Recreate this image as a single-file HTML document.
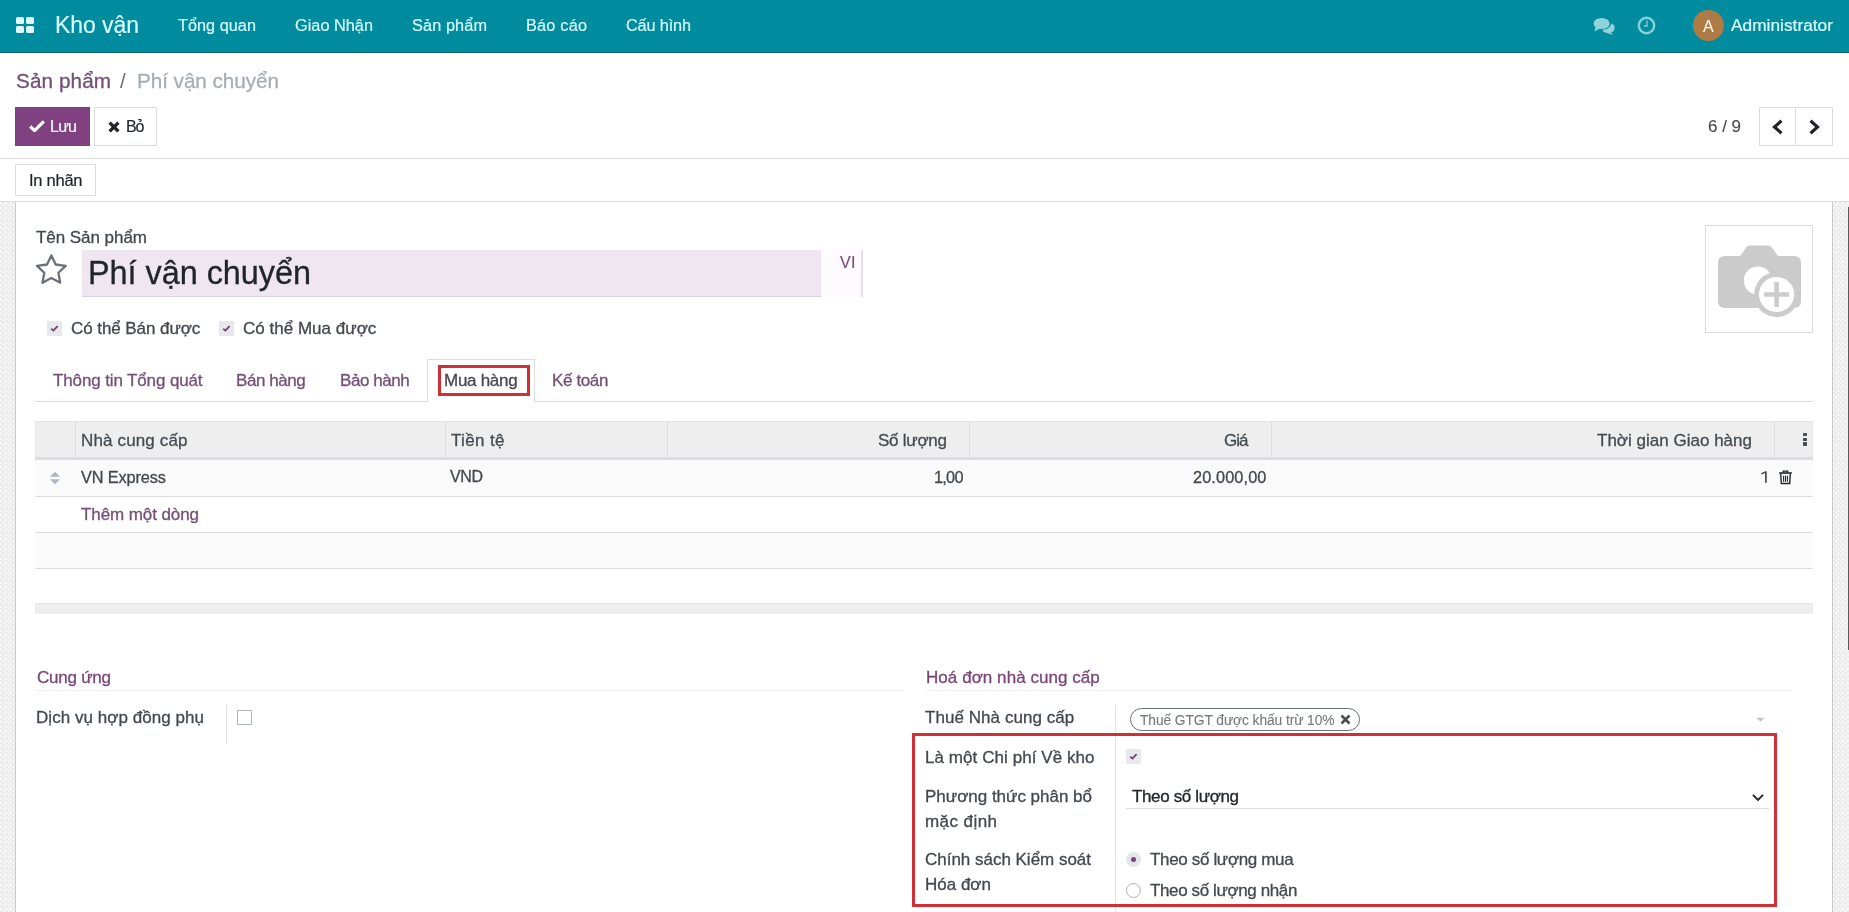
<!DOCTYPE html>
<html><head><meta charset="utf-8"><title>Phí vận chuyển</title>
<style>
html,body{margin:0;padding:0;width:1849px;height:912px;overflow:hidden;background:#fff;font-family:"Liberation Sans", sans-serif;}
.t{position:absolute;white-space:nowrap;line-height:1;will-change:transform;}
</style></head><body>
<div style="position:absolute;left:0px;top:0px;width:1849px;height:52px;background:#008C9E"></div>
<div style="position:absolute;left:0px;top:52px;width:1849px;height:1px;background:#0d5a66"></div>
<div style="position:absolute;left:15.5px;top:16.8px;width:8.5px;height:7.1px;background:#dff9fb;border-radius:1.5px"></div>
<div style="position:absolute;left:25.7px;top:16.8px;width:8.5px;height:7.1px;background:#dff9fb;border-radius:1.5px"></div>
<div style="position:absolute;left:15.5px;top:26px;width:8.5px;height:7.1px;background:#dff9fb;border-radius:1.5px"></div>
<div style="position:absolute;left:25.7px;top:26px;width:8.5px;height:7.1px;background:#dff9fb;border-radius:1.5px"></div>
<div class="t" style="left: 54.5px; top: 14.4px; font-size: 23px; color: rgb(217, 252, 255); font-weight: normal; -webkit-text-stroke-width: 0.15px; letter-spacing: -0.068px;">Kho vận</div>
<div class="t" style="left: 178px; top: 17px; font-size: 16.3px; color: rgb(217, 252, 255); font-weight: normal; -webkit-text-stroke-width: 0.15px; letter-spacing: 0.018px;">Tổng quan</div>
<div class="t" style="left: 295px; top: 17px; font-size: 16.3px; color: rgb(217, 252, 255); font-weight: normal; -webkit-text-stroke-width: 0.15px; letter-spacing: 0.02px;">Giao Nhận</div>
<div class="t" style="left: 412px; top: 17px; font-size: 16.3px; color: rgb(217, 252, 255); font-weight: normal; -webkit-text-stroke-width: 0.15px; letter-spacing: 0.109px;">Sản phẩm</div>
<div class="t" style="left: 526px; top: 17px; font-size: 16.3px; color: rgb(217, 252, 255); font-weight: normal; -webkit-text-stroke-width: 0.15px; letter-spacing: 0.208px;">Báo cáo</div>
<div class="t" style="left: 626px; top: 17px; font-size: 16.3px; color: rgb(217, 252, 255); font-weight: normal; -webkit-text-stroke-width: 0.15px; letter-spacing: -0.156px;">Cấu hình</div>
<svg style="position:absolute;left:1593px;top:17px" width="23" height="19" viewBox="0 0 23 19">
<g fill="#8fd3db">
<ellipse cx="8.6" cy="6.5" rx="8" ry="5.6"></ellipse>
<path d="M2.5 10 L1.5 14.5 L7 11.5 Z"></path>
<path d="M18.5 6.6 C21 7.7 22 9.4 21.6 11.6 C21.2 13.7 19.8 15.2 18 15.7 L20 17.9 L14 16 C11.5 15.7 10 14.6 9.3 12.8 C13.8 12.6 17.8 10.4 18.5 6.6 Z"></path>
</g></svg>
<svg style="position:absolute;left:1637px;top:16px" width="19" height="19" viewBox="0 0 19 19">
<circle cx="9.5" cy="9.5" r="7.7" fill="none" stroke="#86d2db" stroke-width="2.4"></circle>
<path d="M10 4.6 V10 H6.8" fill="none" stroke="#86d2db" stroke-width="1.3"></path>
</svg>
<div style="position:absolute;left:1693px;top:10px;width:31px;height:31px;background:#ae7b45;border-radius:50%"></div>
<div class="t" style="left:1703px;top:18.8px;font-size:16px;color:#fff8ee;font-weight:normal;-webkit-text-stroke-width:0.1px;">A</div>
<div class="t" style="left: 1731px; top: 16.8px; font-size: 17.3px; color: rgb(217, 252, 255); font-weight: normal; -webkit-text-stroke-width: 0.2px; letter-spacing: 0.016px;">Administrator</div>
<div class="t" style="left: 15.8px; top: 71.1px; font-size: 20.7px; color: rgb(116, 79, 119); font-weight: normal; -webkit-text-stroke-width: 0.3px; letter-spacing: 0.098px;">Sản phẩm</div>
<div class="t" style="left:120.3px;top:71.1px;font-size:20.7px;color:#6a6f75;font-weight:normal;-webkit-text-stroke-width:0px;">/</div>
<div class="t" style="left: 136.8px; top: 71.1px; font-size: 20.7px; color: rgb(167, 173, 179); font-weight: normal; -webkit-text-stroke-width: 0.3px; letter-spacing: -0.048px;">Phí vận chuyển</div>
<div style="position:absolute;left:15px;top:107px;width:75px;height:39px;background:#7F417F"></div>
<svg style="position:absolute;left:28.5px;top:119.5px" width="16" height="12" viewBox="0 0 16 12">
<path d="M1.2 6.3 L5.6 10.6 L14.8 1.4" fill="none" stroke="#fff" stroke-width="3.2"></path></svg>
<div class="t" style="left: 49.8px; top: 118.5px; font-size: 16px; color: rgb(255, 255, 255); font-weight: normal; -webkit-text-stroke-width: 0.1px; letter-spacing: -0.758px;">Lưu</div>
<div style="position:absolute;left:94px;top:107px;width:63px;height:39px;box-sizing:border-box;border:1px solid #dddddd;background:#fff"></div>
<svg style="position:absolute;left:107.5px;top:120.5px" width="12" height="12" viewBox="0 0 12 12">
<path d="M1.6 1.6 L10.4 10.4 M10.4 1.6 L1.6 10.4" fill="none" stroke="#212529" stroke-width="3.4"></path></svg>
<div class="t" style="left: 125.9px; top: 118.5px; font-size: 16px; color: rgb(33, 37, 41); font-weight: normal; -webkit-text-stroke-width: 0.15px; letter-spacing: -1.078px;">Bỏ</div>
<div class="t" style="left: 1708px; top: 117.6px; font-size: 17px; color: rgb(74, 74, 74); font-weight: normal; -webkit-text-stroke-width: 0.15px; letter-spacing: -0.023px;">6 / 9</div>
<div style="position:absolute;left:1759px;top:107px;width:74px;height:39px;box-sizing:border-box;border:1px solid #dddddd;background:#fff"></div>
<div style="position:absolute;left:1795px;top:107px;width:1px;height:39px;background:#dddddd"></div>
<svg style="position:absolute;left:1771px;top:118.5px" width="14" height="16" viewBox="0 0 14 16">
<path d="M10.5 1.8 L3.5 8 L10.5 14.2" fill="none" stroke="#212529" stroke-width="3.2"></path></svg>
<svg style="position:absolute;left:1806.5px;top:118.5px" width="14" height="16" viewBox="0 0 14 16">
<path d="M3.5 1.8 L10.5 8 L3.5 14.2" fill="none" stroke="#212529" stroke-width="3.2"></path></svg>
<div style="position:absolute;left:0px;top:158px;width:1849px;height:1px;background:#dddddd"></div>
<div style="position:absolute;left:15px;top:164px;width:81px;height:32px;box-sizing:border-box;border:1px solid #dddddd;background:#fff"></div>
<div class="t" style="left: 29px; top: 172.1px; font-size: 16.5px; color: rgb(33, 37, 41); font-weight: normal; -webkit-text-stroke-width: 0.2px; letter-spacing: -0.26px;">In nhãn</div>
<div style="position:absolute;left:0px;top:201px;width:1849px;height:1px;background:#dddddd"></div>
<div style="position:absolute;left:0px;top:202px;width:1849px;height:710px;background-color:#f1f1f1;background-image:repeating-conic-gradient(#e9e9e9 0 25%, #f8f8f8 0 50%);background-size:4.8px 4.8px"></div>
<div style="position:absolute;left:15px;top:202px;width:1818px;height:710px;box-sizing:border-box;background:#fff;border-left:1px solid #c9c9c9;border-right:1px solid #c9c9c9"></div>
<div style="position:absolute;left:1847.5px;top:207px;width:1.5px;height:443px;background:#5a5a5a"></div>
<div class="t" style="left: 35.7px; top: 228.9px; font-size: 17px; color: rgb(67, 72, 78); font-weight: normal; -webkit-text-stroke-width: 0.3px; letter-spacing: -0.047px;">Tên Sản phẩm</div>
<svg style="position:absolute;left:35px;top:253px" width="33" height="33" viewBox="0 0 33 33">
<path d="M16.35 2.40 L20.70 11.51 L30.71 12.83 L23.39 19.79 L25.23 29.72 L16.35 24.90 L7.47 29.72 L9.31 19.79 L1.99 12.83 L12.00 11.51 Z" fill="none" stroke="#6c7177" stroke-width="2.3" stroke-linejoin="round"></path></svg>
<div style="position:absolute;left:82px;top:250px;width:739px;height:46px;background:#f0e6f2;border-bottom:1px solid #d9d2dc"></div>
<div style="position:absolute;left:821px;top:250px;width:40px;height:47px;background:#fdfbfd"></div>
<div style="position:absolute;left:861px;top:250px;width:1.5px;height:47px;background:#e2e2e6"></div>
<div class="t" style="left: 88.4px; top: 256.7px; font-size: 32.4px; color: rgb(33, 37, 41); font-weight: normal; -webkit-text-stroke-width: 0.3px; letter-spacing: -0.023px;">Phí vận chuyển</div>
<div class="t" style="left: 840px; top: 255.3px; font-size: 16px; color: rgb(122, 75, 124); font-weight: normal; -webkit-text-stroke-width: 0.15px; letter-spacing: 0.375px;">VI</div>
<div style="position:absolute;left:1705px;top:225px;width:108px;height:108px;box-sizing:border-box;border:1px solid #dcdcdc;background:#fff"></div>
<svg style="position:absolute;left:1716px;top:244px" width="88" height="78" viewBox="0 0 88 78">
<path d="M24 12 L31 2.5 Q32 1.5 34 1.5 L52 1.5 Q54 1.5 55 2.5 L62 12 L78 12 Q85 12 85 19 L85 57 Q85 64 78 64 L9 64 Q2 64 2 57 L2 19 Q2 12 9 12 Z" fill="#cbcbcb"></path>
<circle cx="41.8" cy="36.5" r="14" fill="#fff"></circle>
<circle cx="60.6" cy="50.5" r="22.5" fill="#cbcbcb"></circle>
<circle cx="60.6" cy="50.5" r="17.6" fill="#fff"></circle>
<path d="M60.6 38 V63 M48.1 50.5 H73.1" stroke="#cbcbcb" stroke-width="4.6"></path>
</svg>
<div style="position:absolute;left:47px;top:321px;width:15px;height:15px;background:#e6e8ec;border-radius:1px"></div>
<svg style="position:absolute;left:47px;top:321px" width="15" height="15" viewBox="0 0 15 15">
<path d="M4.3 7.6 L6.4 9.6 L10.6 5.2" fill="none" stroke="#6d3f6e" stroke-width="1.7"></path></svg>
<div class="t" style="left: 71.3px; top: 319.5px; font-size: 17px; color: rgb(67, 72, 78); font-weight: normal; -webkit-text-stroke-width: 0.3px; letter-spacing: -0.069px;">Có thể Bán được</div>
<div style="position:absolute;left:219px;top:321px;width:15px;height:15px;background:#e6e8ec;border-radius:1px"></div>
<svg style="position:absolute;left:219px;top:321px" width="15" height="15" viewBox="0 0 15 15">
<path d="M4.3 7.6 L6.4 9.6 L10.6 5.2" fill="none" stroke="#6d3f6e" stroke-width="1.7"></path></svg>
<div class="t" style="left: 243px; top: 319.5px; font-size: 17px; color: rgb(67, 72, 78); font-weight: normal; -webkit-text-stroke-width: 0.3px; letter-spacing: 0.015px;">Có thể Mua được</div>
<div style="position:absolute;left:35px;top:401px;width:1778px;height:1px;background:#dddddd"></div>
<div style="position:absolute;left:427px;top:359px;width:108px;height:43px;box-sizing:border-box;border:1px solid #dddddd;border-bottom:none;background:#fff"></div>
<div class="t" style="left: 52.8px; top: 371.6px; font-size: 17px; color: rgb(116, 79, 119); font-weight: normal; -webkit-text-stroke-width: 0.3px; letter-spacing: -0.126px;">Thông tin Tổng quát</div>
<div class="t" style="left: 236.4px; top: 371.6px; font-size: 17px; color: rgb(116, 79, 119); font-weight: normal; -webkit-text-stroke-width: 0.3px; letter-spacing: -0.457px;">Bán hàng</div>
<div class="t" style="left: 340px; top: 371.6px; font-size: 17px; color: rgb(116, 79, 119); font-weight: normal; -webkit-text-stroke-width: 0.3px; letter-spacing: -0.457px;">Bảo hành</div>
<div class="t" style="left: 444px; top: 371.6px; font-size: 17px; color: rgb(67, 72, 78); font-weight: normal; -webkit-text-stroke-width: 0.3px; letter-spacing: -0.275px;">Mua hàng</div>
<div class="t" style="left: 552px; top: 371.6px; font-size: 17px; color: rgb(116, 79, 119); font-weight: normal; -webkit-text-stroke-width: 0.3px; letter-spacing: -0.368px;">Kế toán</div>
<div style="position:absolute;left:438px;top:365px;width:92px;height:31px;box-sizing:border-box;border:3px solid #d03035"></div>
<div style="position:absolute;left:35px;top:421px;width:1778px;height:1px;background:#e3e3e3"></div>
<div style="position:absolute;left:35px;top:422px;width:1778px;height:35px;background:#eeeeee"></div>
<div style="position:absolute;left:35px;top:457px;width:1778px;height:3px;background:#dcdde3"></div>
<div style="position:absolute;left:75px;top:422px;width:1px;height:35px;background:#dddddd"></div>
<div style="position:absolute;left:445px;top:422px;width:1px;height:35px;background:#dddddd"></div>
<div style="position:absolute;left:667px;top:422px;width:1px;height:35px;background:#dddddd"></div>
<div style="position:absolute;left:969px;top:422px;width:1px;height:35px;background:#dddddd"></div>
<div style="position:absolute;left:1271px;top:422px;width:1px;height:35px;background:#dddddd"></div>
<div style="position:absolute;left:1774px;top:422px;width:1px;height:35px;background:#dddddd"></div>
<div class="t" style="left: 81.4px; top: 431.9px; font-size: 17px; color: rgb(69, 75, 81); font-weight: normal; -webkit-text-stroke-width: 0.3px; letter-spacing: 0.145px;">Nhà cung cấp</div>
<div class="t" style="left: 451px; top: 431.9px; font-size: 17px; color: rgb(69, 75, 81); font-weight: normal; -webkit-text-stroke-width: 0.3px; letter-spacing: 0.359px;">Tiền tệ</div>
<div class="t" style="right: 902.4px; top: 431.9px; font-size: 17px; color: rgb(69, 75, 81); font-weight: normal; -webkit-text-stroke-width: 0.3px; letter-spacing: -0.248px; margin-right: 0.248px;">Số lượng</div>
<div class="t" style="right: 600.6px; top: 431.9px; font-size: 17px; color: rgb(69, 75, 81); font-weight: normal; -webkit-text-stroke-width: 0.3px; letter-spacing: -0.984px; margin-right: 0.984px;">Giá</div>
<div class="t" style="right: 97.1px; top: 431.9px; font-size: 17px; color: rgb(69, 75, 81); font-weight: normal; -webkit-text-stroke-width: 0.3px; letter-spacing: 0.01px; margin-right: -0.01px;">Thời gian Giao hàng</div>
<div style="position:absolute;left:1803.2px;top:432.8px;width:3.6px;height:3.4px;background:#454b51;border-radius:0.8px"></div>
<div style="position:absolute;left:1803.2px;top:437.6px;width:3.6px;height:3.4px;background:#454b51;border-radius:0.8px"></div>
<div style="position:absolute;left:1803.2px;top:442.4px;width:3.6px;height:3.4px;background:#454b51;border-radius:0.8px"></div>
<div style="position:absolute;left:35px;top:460px;width:1778px;height:36px;background:#fafafa"></div>
<div style="position:absolute;left:35px;top:496px;width:1778px;height:1px;background:#dddddd"></div>
<svg style="position:absolute;left:49px;top:471px" width="12" height="14" viewBox="0 0 12 14">
<path d="M1 5.8 L6 0.8 L11 5.8 Z M1 8.2 L6 13.2 L11 8.2 Z" fill="#adb5bd"></path></svg>
<div class="t" style="left: 80.7px; top: 469px; font-size: 16.3px; color: rgb(67, 72, 78); font-weight: normal; -webkit-text-stroke-width: 0.3px; letter-spacing: -0.108px;">VN Express</div>
<div class="t" style="left: 450px; top: 469.3px; font-size: 16px; color: rgb(67, 72, 78); font-weight: normal; -webkit-text-stroke-width: 0.3px; letter-spacing: -0.391px;">VND</div>
<div class="t" style="right: 885.5px; top: 469.2px; font-size: 16.3px; color: rgb(67, 72, 78); font-weight: normal; -webkit-text-stroke-width: 0.3px; letter-spacing: -0.734px; margin-right: 0.734px;">1,00</div>
<div class="t" style="right: 582.6px; top: 469.2px; font-size: 16.3px; color: rgb(67, 72, 78); font-weight: normal; -webkit-text-stroke-width: 0.3px; letter-spacing: 0.12px; margin-right: -0.12px;">20.000,00</div>
<svg style="position:absolute;left:1760px;top:470px" width="9" height="14" viewBox="0 0 9 14"><path d="M5.9 1.4 V12.7" stroke="#43484e" stroke-width="1.7"></path><path d="M6.2 1.1 L1.3 3.0 V4.5 L5.2 3.1 Z" fill="#43484e"></path></svg>
<svg style="position:absolute;left:1778px;top:469.5px" width="15" height="15" viewBox="0 0 15 15">
<path d="M5.3 2.3 V1.1 H9.7 V2.3" fill="none" stroke="#212529" stroke-width="1.3"></path>
<rect x="1.2" y="2.2" width="12.6" height="1.6" fill="#212529"></rect>
<path d="M2.7 3.8 L3.3 13.5 H11.7 L12.3 3.8" fill="none" stroke="#212529" stroke-width="1.4"></path>
<path d="M5.6 5.8 V11.8 M7.5 5.8 V11.8 M9.4 5.8 V11.8" stroke="#212529" stroke-width="1.1"></path>
</svg>
<div class="t" style="left: 80.7px; top: 505.5px; font-size: 17px; color: rgb(116, 79, 119); font-weight: normal; -webkit-text-stroke-width: 0.3px; letter-spacing: -0.089px;">Thêm một dòng</div>
<div style="position:absolute;left:35px;top:532px;width:1778px;height:1px;background:#dddddd"></div>
<div style="position:absolute;left:35px;top:533px;width:1778px;height:35px;background:#fafafa"></div>
<div style="position:absolute;left:35px;top:568px;width:1778px;height:1px;background:#dddddd"></div>
<div style="position:absolute;left:35px;top:603px;width:1778px;height:10px;background:#eeeeee;border-top:1px solid #e3e3e3"></div>
<div class="t" style="left: 36.7px; top: 668.9px; font-size: 17px; color: rgb(122, 69, 121); font-weight: normal; -webkit-text-stroke-width: 0.3px; letter-spacing: -0.237px;">Cung ứng</div>
<div style="position:absolute;left:36px;top:690px;width:868px;height:1px;background:#f0f0f0"></div>
<div class="t" style="left: 36px; top: 708.6px; font-size: 17px; color: rgb(67, 72, 78); font-weight: normal; -webkit-text-stroke-width: 0.3px; letter-spacing: 0.047px;">Dịch vụ hợp đồng phụ</div>
<div style="position:absolute;left:226px;top:705px;width:1px;height:39px;background:#e4e4e4"></div>
<div style="position:absolute;left:237px;top:710px;width:15px;height:15px;box-sizing:border-box;border:1px solid #adb5bd;background:#fff"></div>
<div class="t" style="left: 925.9px; top: 668.9px; font-size: 17px; color: rgb(122, 69, 121); font-weight: normal; -webkit-text-stroke-width: 0.3px; letter-spacing: 0.054px;">Hoá đơn nhà cung cấp</div>
<div style="position:absolute;left:925px;top:690px;width:867px;height:1px;background:#f0f0f0"></div>
<div class="t" style="left: 925.1px; top: 708.7px; font-size: 17px; color: rgb(67, 72, 78); font-weight: normal; -webkit-text-stroke-width: 0.3px; letter-spacing: 0.057px;">Thuế Nhà cung cấp</div>
<div style="position:absolute;left:1115px;top:705px;width:1px;height:207px;background:#e4e4e4"></div>
<div style="position:absolute;left:1130px;top:708px;width:230px;height:23px;box-sizing:border-box;border:1px solid #6a6f74;border-radius:12px;background:#fff"></div>
<div class="t" style="left: 1140px; top: 713.6px; font-size: 13.8px; color: rgb(116, 121, 126); font-weight: normal; -webkit-text-stroke-width: 0.1px; letter-spacing: -0.086px;">Thuế GTGT được khấu trừ 10%</div>
<svg style="position:absolute;left:1340px;top:714px" width="11" height="11" viewBox="0 0 11 11">
<path d="M1.5 1.5 L9.5 9.5 M9.5 1.5 L1.5 9.5" stroke="#4a4f54" stroke-width="2.6"></path></svg>
<svg style="position:absolute;left:1755px;top:717px" width="11" height="6" viewBox="0 0 11 6">
<path d="M1.5 0.8 L9.5 0.8 L5.5 4.8 Z" fill="#c4c4c4"></path></svg>
<div class="t" style="left: 925px; top: 749.1px; font-size: 17px; color: rgb(67, 72, 78); font-weight: normal; -webkit-text-stroke-width: 0.3px; letter-spacing: 0.064px;">Là một Chi phí Về kho</div>
<div style="position:absolute;left:1126px;top:749px;width:15px;height:15px;background:#e6e8ec;border-radius:1px"></div>
<svg style="position:absolute;left:1126px;top:749px" width="15" height="15" viewBox="0 0 15 15">
<path d="M4.3 7.6 L6.4 9.6 L10.6 5.2" fill="none" stroke="#6d3f6e" stroke-width="1.7"></path></svg>
<div class="t" style="left: 925px; top: 787.9px; font-size: 17px; color: rgb(67, 72, 78); font-weight: normal; -webkit-text-stroke-width: 0.3px; letter-spacing: -0.01px;">Phương thức phân bổ</div>
<div class="t" style="left: 925px; top: 813.2px; font-size: 17px; color: rgb(67, 72, 78); font-weight: normal; -webkit-text-stroke-width: 0.3px; letter-spacing: 0.431px;">mặc định</div>
<div class="t" style="left: 1132.2px; top: 787.9px; font-size: 17px; color: rgb(33, 37, 41); font-weight: normal; -webkit-text-stroke-width: 0.3px; letter-spacing: -0.365px;">Theo số lượng</div>
<div style="position:absolute;left:1126px;top:808px;width:643px;height:1px;background:#dddddd"></div>
<svg style="position:absolute;left:1751px;top:791.5px" width="14" height="11" viewBox="0 0 14 11">
<path d="M1.9 2.8 L7 7.9 L12.1 2.8" fill="none" stroke="#212529" stroke-width="1.9"></path></svg>
<div class="t" style="left: 925px; top: 851.1px; font-size: 17px; color: rgb(67, 72, 78); font-weight: normal; -webkit-text-stroke-width: 0.3px; letter-spacing: -0.016px;">Chính sách Kiểm soát</div>
<div class="t" style="left:925px;top:875.6px;font-size:17px;color:#43484e;font-weight:normal;-webkit-text-stroke-width:0.3px;">Hóa đơn</div>
<div style="position:absolute;left:1126px;top:852px;width:15px;height:15px;border-radius:50%;background:#e4e6ea"></div>
<div style="position:absolute;left:1131px;top:857px;width:5px;height:5px;border-radius:50%;background:#7f417f"></div>
<div class="t" style="left: 1150px; top: 851.1px; font-size: 17px; color: rgb(67, 72, 78); font-weight: normal; -webkit-text-stroke-width: 0.3px; letter-spacing: -0.342px;">Theo số lượng mua</div>
<div style="position:absolute;left:1126px;top:883px;width:15px;height:15px;box-sizing:border-box;border-radius:50%;border:1px solid #adb5bd;background:#fff"></div>
<div class="t" style="left: 1150px; top: 882.2px; font-size: 17px; color: rgb(67, 72, 78); font-weight: normal; -webkit-text-stroke-width: 0.3px; letter-spacing: -0.383px;">Theo số lượng nhận</div>
<div style="position:absolute;left:912px;top:733.3px;width:865px;height:173.7px;box-sizing:border-box;border:3px solid #d03035"></div>
</body></html>
